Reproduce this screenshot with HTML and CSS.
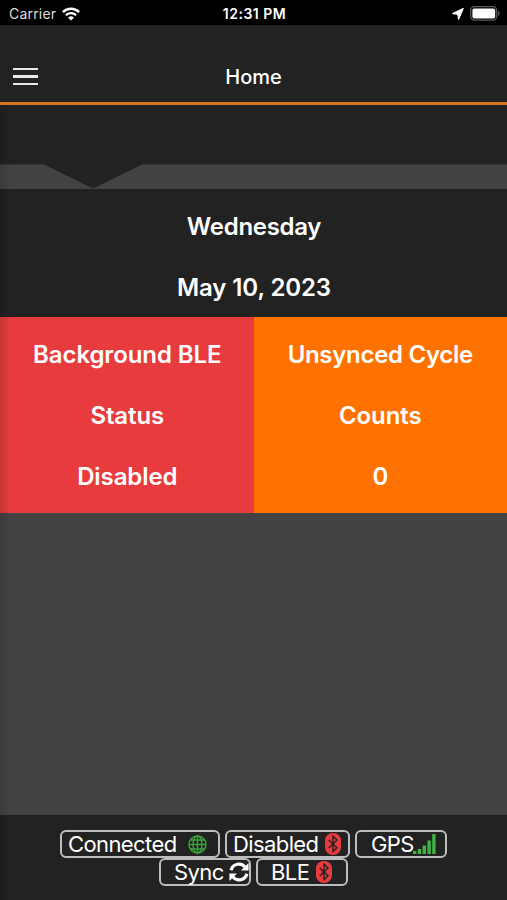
FILE: index.html
```html
<!DOCTYPE html>
<html lang="en">
<head>
<meta charset="utf-8">
<title>Home</title>
<link rel="stylesheet" href="styles.css">
</head>
<body>
<svg class="defs" width="0" height="0" aria-hidden="true">
  <symbol id="bluetooth" viewBox="0 0 16 22">
    <rect x="0" y="0" width="16" height="22" rx="7.5" fill="#e73b3d"/>
    <path d="M3.8 6.9 12 14.7 8 18.6V3.2l4 3.9-8.2 7.8" fill="none" stroke="#222" stroke-width="1.4"/>
  </symbol>
</svg>
<div class="status">
  <div class="carrier"><span>Carrier</span>
    <svg width="18" height="14" viewBox="0 0 18 14" fill="none" stroke="#fff" stroke-width="2.3">
      <path d="M.9 5.1a11.5 11.5 0 0 1 16.2 0M3.9 8.2a7.2 7.2 0 0 1 10.2 0"/>
      <path d="M9 13.6 6.1 10.7a4.1 4.1 0 0 1 5.8 0z" fill="#fff" stroke="none"/>
    </svg>
  </div>
  <time>12:31 PM</time>
  <div class="power">
    <svg width="12" height="12" viewBox="0 0 12 12"><path d="M11.2.6 6.6 11.2 5.8 6.3.8 5.600z" fill="#fff" stroke="#fff" stroke-width="1.1" stroke-linejoin="round"/></svg>
    <svg width="30" height="15" viewBox="0 0 30 15"><rect x=".7" y=".7" width="26" height="13.4" rx="3.8" fill="none" stroke="#5b5b5b" stroke-width="1.3"/><rect x="2.4" y="2.4" width="22.8" height="10" rx="2" fill="#fff"/><path d="M28 5v5q1.6-.7 1.6-2.5T28 5z" fill="#5b5b5b"/></svg>
  </div>
</div>
<header class="nav">
  <div class="menu"><i></i><i></i><i></i></div>
  <h1>Home</h1>
  <div></div>
</header>
<main>
  <div class="spacer"></div>
  <svg class="notch" width="507" height="25" viewBox="0 0 507 25"><path d="M0 .5H44L93 24.500 142 .5H507V25H0z" fill="#434343"/></svg>
  <section class="date"><p class="day">Wednesday</p><p class="full">May 10, 2023</p></section>
  <section class="tiles">
    <div class="tile red"><p>Background BLE</p><p>Status</p><p>Disabled</p></div>
    <div class="tile orange"><p class="cycle">Unsynced Cycle</p><p>Counts</p><p>0</p></div>
  </section>
</main>
<footer>
  <div class="row">
    <div class="pill connected"><span>Connected</span>
      <svg width="19" height="19" viewBox="0 0 19 19" fill="none" stroke="#38a53b" stroke-width="1.4"><circle cx="9.5" cy="9.5" r="8.5"/><ellipse cx="9.5" cy="9.5" rx="4.5" ry="8.5"/><path d="M9.5 1v17M1 9.5h17M2.2 5h14.6M2.2 14h14.6"/></svg>
    </div>
    <div class="pill disabled"><span>Disabled</span><svg width="16" height="22"><use href="#bluetooth"/></svg></div>
    <div class="pill gps"><span>GPS</span>
      <svg width="23" height="20" viewBox="0 0 23 20" fill="#3fb443"><path d="M0 17h3.4v3H0zM4.800 15h3.400v5H4.800zM9.600 11.500H13V20H9.600zM14.400 6.500h3.400V20h-3.400zM19.200 0h3.400v20h-3.400z"/></svg>
    </div>
  </div>
  <div class="row">
    <div class="pill sync"><span>Sync</span>
      <svg width="20" height="20" viewBox="0 0 20 20"><path d="M2 8.200C4 1.500 12 .2 16 5M18 11.800C16 18.500 8 19.800 4 15" fill="none" stroke="#fff" stroke-width="3.200"/><path d="M19.600 1V8.500H12zM.4 19V11.500H8z" fill="#fff"/></svg>
    </div>
    <div class="pill ble"><span>BLE</span><svg width="16" height="22"><use href="#bluetooth"/></svg></div>
  </div>
</footer>
<div class="edge"></div>
</body>
</html>
```
FILE: styles.css
```css
* { box-sizing: border-box; }
body { margin: 0; width: 507px; height: 900px; display: flex; flex-direction: column; position: relative; overflow: hidden; background: #222; color: #fff; font-family: Inter, "Liberation Sans", sans-serif; }
p, h1 { margin: 0; }
svg { display: block; flex: none; }
.defs { position: absolute; }
.status { height: 25px; flex: none; background: #000; display: grid; grid-template-columns: 1fr auto 1fr; align-items: center; padding: 2px 7px 0 9px; font-size: 14px; line-height: 18px; }
.carrier { display: flex; align-items: center; gap: 6px; color: #ddd; letter-spacing: .2px; }
.status time { font-weight: 600; font-size: 14px; letter-spacing: .5px; }
.power { display: flex; align-items: center; justify-content: flex-end; gap: 6px; }
.nav { height: 80px; flex: none; display: grid; grid-template-columns: 1fr auto 1fr; align-items: center; padding: 26px 13px 0; border-bottom: 3px solid #d9731c; }
.menu { width: 25px; display: grid; gap: 5px; }
.menu i { height: 2.5px; background: #e8e8e8; }
.nav h1 { font-size: 20px; line-height: 24px; font-weight: 500; }
main { flex: 1; display: flex; flex-direction: column; background: #434343; }
.spacer { height: 59px; background: #222; }
.notch { background: #222; }
.date { height: 128px; background: #222; padding-top: 7px; text-align: center; }
.date p, .tile p { font-size: 24px; line-height: 61px; font-weight: 600; letter-spacing: -.1px; }
.date .day, .tile .cycle { letter-spacing: -.3px; }
.date { padding-left: 1px; }
.tiles { display: grid; grid-template-columns: 1fr 1fr; height: 196px; text-align: center; }
.tile { padding-top: 7px; }
.red { background: #e73b3d; padding-left: 1px; }
.orange { background: #ff7200; }
footer { height: 85px; flex: none; padding-top: 15px; background: #222; }
.row { display: flex; justify-content: center; gap: 5px; height: 28px; }
.pill { height: 28px; border: 2px solid #bdbdbd; border-radius: 6px; display: flex; align-items: center; font-size: 22px; line-height: 24px; letter-spacing: -.6px; white-space: nowrap; }
.connected { width: 160px; padding-left: 6px; gap: 11px; }
.disabled { width: 125px; padding-left: 6px; gap: 7px; }
.gps { width: 92px; padding-left: 14px; }
.gps svg { margin-left: -1px; }
.sync { width: 92px; padding-left: 13px; gap: 5px; }
.ble { width: 92px; padding-left: 13px; gap: 7px; }
.edge { position: absolute; left: 0; top: 105px; bottom: 0; width: 9px; background: linear-gradient(90deg, rgba(0,0,0,.12), rgba(0,0,0,.03)); }
```
